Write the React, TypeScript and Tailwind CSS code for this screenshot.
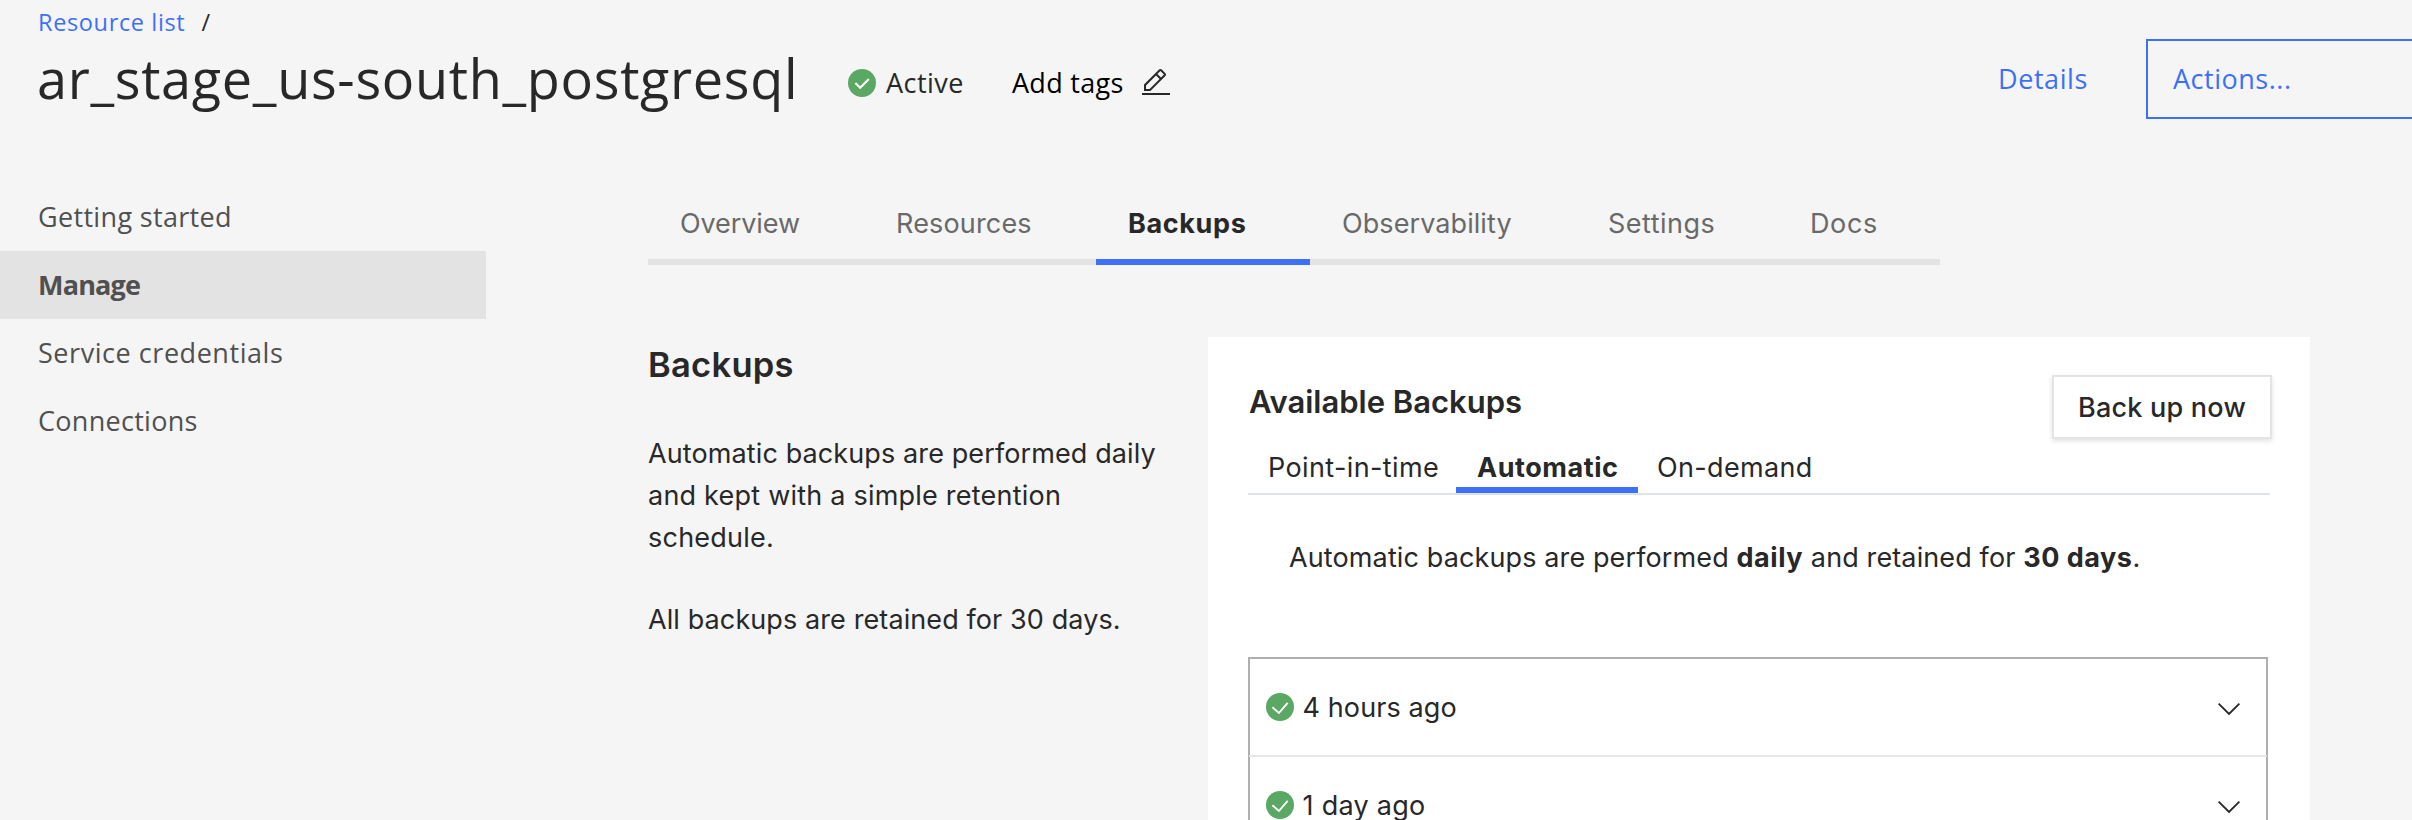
import { clsx } from "clsx";

const plex = "font-['Open_Sans',sans-serif]";

function StatusIcon({ variant }: { variant: "header" | "row" }) {
  return (
    <svg width="28" height="28" viewBox="0 0 28 28" fill="none" className="shrink-0">
      <circle cx="14" cy="14" r="14" fill="#5aa864" />
      {variant === "header" ? (
        <path d="M7.4 14L12.2 18.7L20.9 9.9" stroke="#fff" strokeWidth="2.1" />
      ) : (
        <path d="M6.4 14.3L12.9 20L21.7 9.8" stroke="#fff" strokeWidth="1.9" />
      )}
    </svg>
  );
}

function EditIcon() {
  return (
    <svg width="32" height="32" viewBox="0 0 32 32" fill="#282828" className="shrink-0">
      <path d="M2 26H30V28H2z" />
      <path d="M25.4 9c.8-.8.8-2 0-2.8l-3.6-3.6c-.8-.8-2-.8-2.8 0l-15 15V24h6.4L25.4 9zM20.4 4L24 7.6l-3 3L17.4 7 20.4 4zM6 22v-3.6l10-10 3.6 3.6-10 10H6z" />
    </svg>
  );
}

function Chevron() {
  return (
    <svg width="22" height="14" viewBox="0 0 22 14" fill="none">
      <path d="M0.6 1.6L11 12L21.4 1.6" stroke="#282828" strokeWidth="1.9" />
    </svg>
  );
}

const sideItems = [
  { label: "Getting started", cls: "pl-[38px] tracking-[0.33px]" },
  { label: "Manage", cls: "bg-[#e3e3e3] pl-[38px] font-bold tracking-[-0.8px]" },
  { label: "Service credentials", cls: "pl-[38px] tracking-[0.55px]" },
  { label: "Connections", cls: "pl-[38px] tracking-[0.28px]" },
];

const tabs = [
  { label: "Overview", cls: "w-[216px] tracking-[-0.1px]" },
  { label: "Resources", cls: "w-[232px] tracking-[0.17px]" },
  { label: "Backups", cls: "w-[214px] tracking-[0.62px]", active: true },
  { label: "Observability", cls: "w-[266px] tracking-[0.08px]" },
  { label: "Settings", cls: "w-[202px] tracking-[0.5px]" },
  { label: "Docs", cls: "w-[162px] tracking-[0.63px]" },
];

const backups = [
  { label: "4 hours ago", cls: "tracking-[0.11px]" },
  { label: "1 day ago", cls: "tracking-[0.28px]" },
];

function Header() {
  return (
    <header className={clsx("flex h-[183px] shrink-0 whitespace-nowrap text-[27px] text-[#282828]", plex)}>
      <div className="flex-1">
        <div className="flex h-11 pl-[38px] text-[23.5px] leading-[44px]">
          <a className="w-[163.5px] tracking-[0.64px] text-[#3d70f9]">Resource list</a>
          <span>/</span>
        </div>
        <div className="flex h-[68px] pl-[37px]">
          <h1 className="w-[811px] text-[54px] leading-[68px] tracking-[0.68px]">ar_stage_us-south_postgresql</h1>
          <div className="flex h-[68px] items-center pt-[10px]">
            <StatusIcon variant="header" />
            <span className="ml-[10px] w-[126px] tracking-[0.47px]">Active</span>
            <span className="w-[128px] tracking-[0.3px] text-black">Add tags</span>
            <EditIcon />
          </div>
        </div>
      </div>
      <div className="flex h-[119px] w-[414px] pt-[39px] leading-[80px] text-[#3d70f9]">
        <a className="w-[148px] shrink-0 tracking-[0.58px]">Details</a>
        <button className="h-20 w-[300px] shrink-0 border-2 border-[#3d70f9] pl-[25px] text-left leading-[76px] tracking-[0.52px]">
          Actions...
        </button>
      </div>
    </header>
  );
}

function BackupsCard() {
  return (
    <section className="h-[600px] w-[1102px] bg-white pl-10 pt-[38px]">
      <div className="flex h-16 w-[1024px] justify-between">
        <h3 className="pl-px pt-[7px] text-[31px] font-semibold leading-[40px]">Available Backups</h3>
        <button className="h-16 w-[220px] border-2 border-[#e4e4e4] bg-white pt-0.5 font-medium tracking-[0.23px] shadow-[0_2px_5px_rgba(0,0,0,0.12)]">
          Back up now
        </button>
      </div>
      <div className="mt-[10px] flex w-[1022px] border-b-2 border-[#dfe3e8] leading-[38px]">
        <div className="w-[208px] pl-5 tracking-[0.38px]">Point-in-time</div>
        <div className="w-[182px] border-b-[6px] border-[#3d70f9] pl-[21px] font-bold tracking-[0.54px]">Automatic</div>
        <div className="pl-[19px] tracking-[0.34px]">On-demand</div>
      </div>
      <p className="mt-[42px] pl-[41px] leading-[42px] tracking-[0.12px]">
        Automatic backups are performed <b className="font-bold tracking-[0.55px]">daily</b> and retained for{" "}
        <b className="font-bold tracking-[0.5px]">30 days</b>.
      </p>
      <div className="mt-[78px] w-[1020px] border-2 border-b-0 border-[#aeaeae]">
        {backups.map((b) => (
          <div key={b.label} className="-mx-px border-b-2 border-[#e6e6e6]">
            <div className="flex h-24 items-center pl-[17px] pr-[27px]">
              <StatusIcon variant="row" />
              <span className={clsx("ml-[8.5px] flex-1 pt-0.5", b.cls)}>{b.label}</span>
              <div className="pt-1">
                <Chevron />
              </div>
            </div>
          </div>
        ))}
      </div>
    </section>
  );
}

export default function App() {
  return (
    <div className="flex h-[820px] w-[2412px] flex-col overflow-hidden bg-[#f5f5f5] font-[Inter,sans-serif] text-[27px] text-[#282828]">
      <Header />
      <div className="flex whitespace-nowrap">
        <nav className={clsx("mr-[162px] w-[486px] text-[#505050]", plex)}>
          {sideItems.map((s) => (
            <div key={s.label} className={clsx("h-[68px] leading-[68px]", s.cls)}>
              {s.label}
            </div>
          ))}
        </nav>
        <main>
          <div className="flex pt-1.5 leading-[70px]">
            {tabs.map((t) => (
              <div
                key={t.label}
                className={clsx(
                  "border-b-[6px] pl-8",
                  t.cls,
                  t.active ? "border-[#3d70f9] font-bold" : "border-[#e3e3e3] text-[#696969]"
                )}
              >
                {t.label}
              </div>
            ))}
          </div>
          <div className="mt-[72px] flex">
            <section className="w-[560px] pt-1.5">
              <h2 className="text-[34.5px] font-semibold leading-[44px] tracking-[0.28px]">Backups</h2>
              <p className="mt-[46px] leading-[42px]">
                <span className="block tracking-[0.11px]">Automatic backups are performed daily</span>
                <span className="block tracking-[0.22px]">and kept with a simple retention</span>
                <span className="block tracking-[0.23px]">schedule.</span>
              </p>
              <p className="mt-10 leading-[42px] tracking-[0.1px]">All backups are retained for 30 days.</p>
            </section>
            <BackupsCard />
          </div>
        </main>
      </div>
    </div>
  );
}
